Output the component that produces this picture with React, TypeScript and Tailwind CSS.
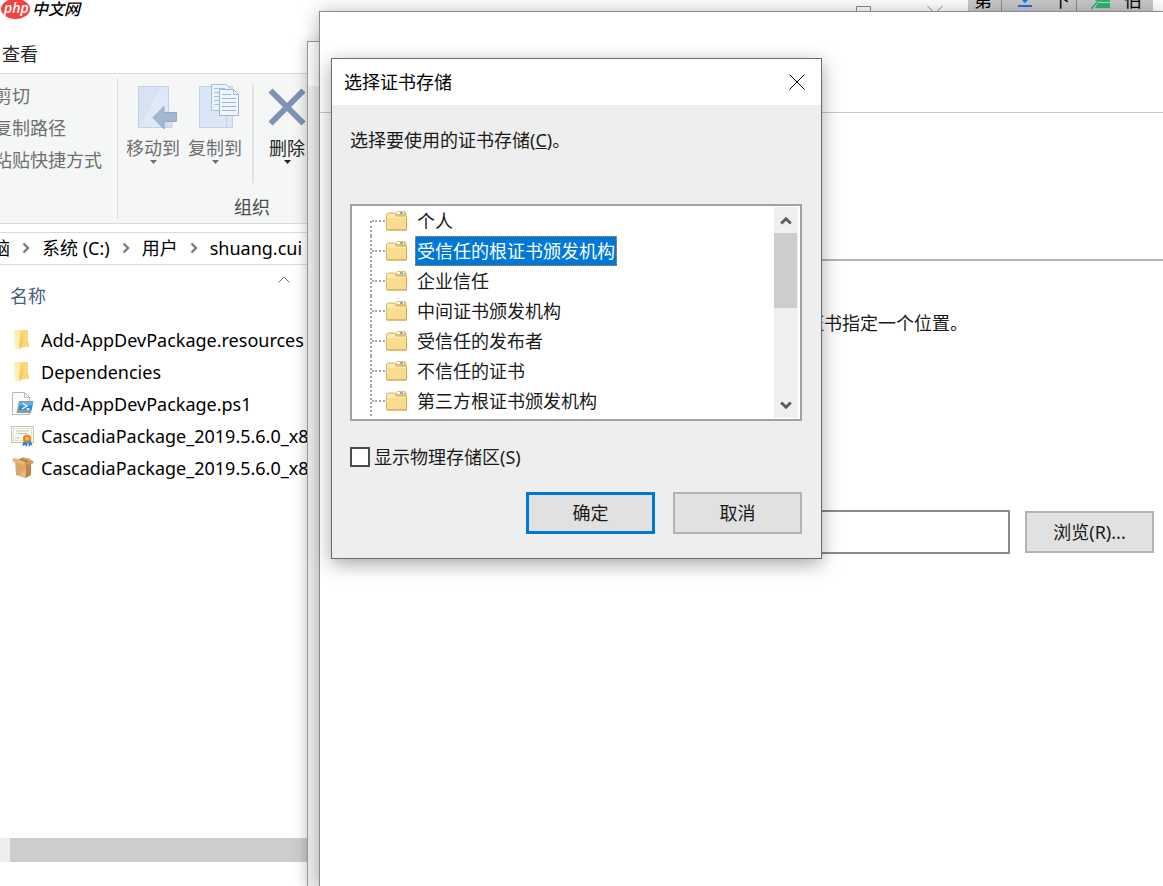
import type { ReactNode } from "react";
import { useState } from "react";

const stores = [
  "个人",
  "受信任的根证书颁发机构",
  "企业信任",
  "中间证书颁发机构",
  "受信任的发布者",
  "不信任的证书",
  "第三方根证书颁发机构",
];

function FolderIcon() {
  return (
    <svg width="24" height="24" viewBox="0 0 24 24">
      <path d="M4 2h6v17H4z" fill="#fbe8a8" />
      <path d="M9 2h8v12l1 1v4H9z" fill="#f8d775" />
      <path d="M3 3l5 2v17l-4-2z" fill="#fdeebb" />
      <path d="M10 8l2-3v14l-4 2v-6z" fill="#f5cf66" />
    </svg>
  );
}

function ScriptIcon() {
  return (
    <svg width="24" height="24" viewBox="0 0 24 24">
      <path d="M1.500 .5h12l5 5v17h-17z" fill="#fafafa" stroke="#b5b8bb" />
      <path d="M13.500 .5v5h5" fill="none" stroke="#b5b8bb" />
      <path d="M8 9h14.500l-2.500 12H5.500z" fill="#8d9aa5" />
      <path d="M9.500 10h12.500l-1.500 8H7.500z" fill="#2b8ed8" />
      <path d="M9.500 10h12.500l-.7 3.500H8.700z" fill="#5db1ea" />
      <path d="M12 11.500l4 2.500-5 3M15.500 17h3" fill="none" stroke="#fff" strokeWidth="1.400" />
    </svg>
  );
}

function CertificateIcon() {
  return (
    <svg width="24" height="24" viewBox="0 0 24 24">
      <rect x="0.500" y="2.500" width="22" height="16" fill="#fbfaf4" stroke="#c9c3ac" />
      <rect x="2.500" y="4.500" width="18" height="12" fill="none" stroke="#e4e0d0" />
      <path d="M5 7h13M7 9.500h9M4 14h5" stroke="#b9c3cc" />
      <path d="M13 16l-2 6 3-1 2 2 1-5 1 5 1.500-2 2 .5-2-6z" fill="#2f86d6" />
      <circle cx="16" cy="14.500" r="4" fill="#e08a1e" />
      <circle cx="16" cy="14.500" r="2" fill="#f6b54a" />
    </svg>
  );
}

function PackageIcon() {
  return (
    <svg width="24" height="24" viewBox="0 0 24 24">
      <path d="M4 5l11 3v14L5 19z" fill="#d9a766" />
      <path d="M15 8l5-2v13l-5 3z" fill="#bb8442" />
      <path d="M4 4l8-2 8 3-5 3z" fill="#a9763a" />
      <path d="M1 3l3-1 11 4-2 3L2 6z" fill="#e3b778" />
      <path d="M15 6l6-2 2 3-7 2z" fill="#cf9a55" />
      <path d="M8 20l6-7v9z" fill="#e4bd85" />
      <path d="M11 1l9 2-2 2-7-2z" fill="#d6a564" />
    </svg>
  );
}

const files: { name: string; icon: ReactNode }[] = [
  { name: "Add-AppDevPackage.resources", icon: <FolderIcon /> },
  { name: "Dependencies", icon: <FolderIcon /> },
  { name: "Add-AppDevPackage.ps1", icon: <ScriptIcon /> },
  { name: "CascadiaPackage_2019.5.6.0_x8", icon: <CertificateIcon /> },
  { name: "CascadiaPackage_2019.5.6.0_x8", icon: <PackageIcon /> },
];

function MoveIcon() {
  return (
    <svg width="40" height="46" viewBox="0 0 40 46">
      <rect x="1.500" y="2.500" width="30" height="41" fill="#d7e3f3" stroke="#c3d2e8" />
      <path d="M2 43L24 3h7v40z" fill="#dfe9f6" />
      <path d="M31.500 27l3.500 3v13.500h-7V30z" fill="#d3dff0" stroke="#c3d2e8" />
      <path d="M16 33.500L27 22.500v6h12.500v9H27v7.500z" fill="#a3b7d0" stroke="#93a9c5" />
    </svg>
  );
}

function CopyIcon() {
  return (
    <svg width="42" height="46" viewBox="0 0 42 46">
      <rect x="1.500" y="2.500" width="33" height="41" fill="#dbe6f4" stroke="#c3d2e8" />
      <path d="M28.500 28v15.500" stroke="#c3d2e8" />
      <path d="M13.500 .5h15l4 4v22h-19z" fill="#e9f2fa" stroke="#a9c1dc" />
      <path d="M16 4.500h11M16 8.500h6M16 12.500h6M16 16.500h6M16 20.500h6" stroke="#a9c1dc" />
      <path d="M21.500 5.500h14l5 5v21h-19z" fill="#eef6fc" stroke="#9db8d6" />
      <path d="M35.500 5.500v5h5" fill="none" stroke="#9db8d6" />
      <path d="M24 10.500h9M24 14.500h14M24 18.500h14M24 22.500h14M24 26.500h14" stroke="#9db8d6" />
    </svg>
  );
}

function DeleteIcon() {
  return (
    <svg width="38" height="46" viewBox="0 0 38 46">
      <path d="M2.500 6.500l33 33M35.500 6.500l-33 33" stroke="#8093b6" strokeWidth="6" />
    </svg>
  );
}

function RibbonButton({ label, icon, dark = false }: { label: string; icon: ReactNode; dark?: boolean }) {
  return (
    <button
      type="button"
      className={
        dark
          ? "flex shrink-0 flex-col items-center text-[#262626]"
          : "flex shrink-0 flex-col items-center text-[#6f6f6f]"
      }
    >
      <span className={dark ? "block" : "block pl-2"}>{icon}</span>
      <span className="mt-1.5 whitespace-nowrap leading-6">{label}</span>
      <svg width="7" height="4" viewBox="0 0 7 4">
        <path d="M0 0h7L3.500 4z" fill="currentColor" />
      </svg>
    </button>
  );
}

function Crumb() {
  return (
    <svg width="8" height="12" viewBox="0 0 8 12" className="shrink-0">
      <path d="M1.500 1.500L6 6l-4.500 4.500" fill="none" stroke="#7d7d7d" strokeWidth="2.400" />
    </svg>
  );
}

function Explorer() {
  return (
    <section className="flex h-screen w-[308px] flex-col overflow-hidden bg-white">
      <div className="flex h-[35px] shrink-0 items-start">
        <svg width="32" height="20" viewBox="0 0 32 20" className="shrink-0">
          <ellipse cx="15.500" cy="9" rx="14.500" ry="10" fill="#f8403c" />
          <text
            x="4"
            y="13"
            fill="#fff"
            fontSize="14"
            fontStyle="italic"
            fontWeight="600"
            fontFamily="Open Sans, sans-serif"
          >
            php
          </text>
        </svg>
        <span className="whitespace-nowrap text-base italic leading-[18px] font-medium">中文网</span>
      </div>

      <div className="flex h-[38px] shrink-0 items-center px-0.5">
        <button type="button" className="leading-6 text-[#262626]">
          查看
        </button>
      </div>

      <div className="flex h-[151px] shrink-0 border-y border-[#dadbdc] bg-[#f5f6f6]">
        <div className="-ml-1.5 my-1 flex w-[124px] shrink-0 flex-col items-start border-r border-[#dfe0e1] pt-0.5 text-[#6f6f6f]">
          <button type="button" className="h-8 whitespace-nowrap">剪切</button>
          <button type="button" className="h-8 whitespace-nowrap">复制路径</button>
          <button type="button" className="h-8 whitespace-nowrap">粘贴快捷方式</button>
        </div>
        <div className="flex flex-col pl-2 pt-2.5">
          <div className="flex gap-2">
            <RibbonButton label="移动到" icon={<MoveIcon />} />
            <RibbonButton label="复制到" icon={<CopyIcon />} />
            <div className="ml-0.5 h-[99px] w-0.5 shrink-0 bg-[#e2e3e4]" />
            <div className="pl-1.5">
              <RibbonButton label="删除" icon={<DeleteIcon />} dark />
            </div>
          </div>
          <span className="mt-3 pl-27 leading-6 text-[#4a4a4a]">组织</span>
        </div>
      </div>

      <nav className="mt-2 flex h-[33px] shrink-0 items-center gap-3 border-y border-[#d9d9d9] pb-0.5 whitespace-nowrap">
        <span className="-ml-2">脑</span>
        <Crumb />
        <span>系统 (C:)</span>
        <Crumb />
        <span>用户</span>
        <Crumb />
        <span>shuang.cui</span>
      </nav>

      <div className="flex shrink-0 flex-col px-2.5 pt-[11px]">
        <svg width="12" height="8" viewBox="0 0 12 8" className="mr-2 self-end">
          <path d="M.5 6.500L6 1l5.500 5.500" fill="none" stroke="#6d6d6d" />
        </svg>
        <span className="leading-6 text-[#43607e]">名称</span>
      </div>

      <ul className="flex-1 pt-4">
        {files.map((file, i) => (
          <li key={i} className="flex h-8 items-center gap-1.5 pl-[11px] whitespace-nowrap">
            <span className="shrink-0">{file.icon}</span>
            {file.name}
          </li>
        ))}
      </ul>

      <div className="mb-6 flex h-6 shrink-0 bg-[#eeeeee] pl-2.5">
        <div className="flex-1 bg-[#cdcdcd]" />
      </div>
    </section>
  );
}

function TopStrip() {
  return (
    <div className="absolute inset-x-0 top-0 flex h-3 justify-end overflow-hidden pr-2.5">
      <svg width="88" height="12" viewBox="0 0 88 12" className="mr-6 shrink-0">
        <path d="M.5 12V6.500h14V12M71.500 6l7.500 7.500L86.500 6" fill="none" stroke="#8a8a8a" />
      </svg>
      <div className="flex h-3 w-[185px] items-end bg-[#c9c9c9]">
        <span className="w-[34px] border-r border-[#8c8c8c] pl-1.5 leading-6">第</span>
        <div className="flex w-[75px] items-end gap-5 border-r border-[#8c8c8c] pl-4">
          <svg width="14" height="12" viewBox="0 0 14 12" className="shrink-0">
            <path d="M4 0h6L7 3zM0 5h14v2H0z" fill="#1f74e8" />
          </svg>
          <span className="leading-6">下</span>
        </div>
        <div className="flex flex-1 items-end gap-3.5 pl-3.5">
          <svg width="19" height="12" viewBox="0 0 19 12" className="shrink-0">
            <path d="M3 0h16v2H9zM7 3h12v5H4z" fill="#2bb673" />
            <path d="M0 9L8 0" stroke="#2bb673" strokeWidth="1.500" />
          </svg>
          <span className="leading-6">伯</span>
        </div>
      </div>
    </div>
  );
}

function Wizard() {
  return (
    <section className="absolute bottom-0 left-[319px] right-0 top-[11px] border-l border-t border-[#8c8c8c] bg-white shadow-[0_2px_18px_rgba(0,0,0,0.3)]">
      <div className="h-[101px] border-b border-[#c8c8c8]" />
      <div className="ml-12 h-[148px] border-b-2 border-[#b4b4b4]" />
      <p className="mt-[50px] pl-[486px] leading-6 text-[#1a1a1a]">证书指定一个位置。</p>
      <div className="mt-[175px] flex items-center gap-[15px] pl-12 pr-[9px]">
        <input
          type="text"
          aria-label="证书存储"
          className="h-11 min-w-0 flex-1 border-2 border-[#8a8a8a] bg-white px-2 outline-none"
        />
        <button type="button" className="h-[42px] w-[129px] border-2 border-[#b3b3b3] bg-[#e1e1e1] text-[#1a1a1a]">
          浏览(R)...
        </button>
      </div>
    </section>
  );
}

function StoreIcon() {
  return (
    <svg width="22" height="22" viewBox="0 0 22 22" className="shrink-0">
      <path d="M10 4l2-3h8l1.500 2v16H10z" fill="#e3bf72" />
      <rect x="12" y="2" width="7" height="2" fill="#fff" />
      <rect x="15" y="2" width="3" height="2" fill="#7db4de" />
      <path d="M1.500 5q0-2 2-2h6l2 3h10v14H1.500z" fill="#f8dc90" stroke="#dcb868" />
      <path d="M2 6q0-2 1.500-2h5.500l2 3h10v1H2z" fill="#fbe9b4" />
      <path d="M21.500 8v12H2" fill="none" stroke="#cda654" />
    </svg>
  );
}

function ScrollArrow({ down = false }: { down?: boolean }) {
  return (
    <svg width="12" height="9" viewBox="0 0 12 9">
      <path
        d={down ? "M1.200 1.500L6 6.300l4.800-4.800" : "M1.200 7.500L6 2.700l4.800 4.800"}
        fill="none"
        stroke="#5c5c5c"
        strokeWidth="2.800"
      />
    </svg>
  );
}

function StoreTree() {
  const [selected, setSelected] = useState(1);

  return (
    <div className="flex h-[217px] overflow-hidden border-2 border-[#9da1ab] bg-white">
      <ul role="tree" className="flex-1 pl-[18px]">
        {stores.map((store, i) => (
          <li
            key={store}
            role="treeitem"
            aria-selected={i === selected}
            onClick={() => setSelected(i)}
            className="flex h-[30px] cursor-default items-center whitespace-nowrap"
          >
            <span
              className={
                i === 0
                  ? "h-[15px] self-end border-l-2 border-dotted border-[#a8a8a8]"
                  : "h-[30px] border-l-2 border-dotted border-[#a8a8a8]"
              }
            />
            <span className="w-[13px] border-t-2 border-dotted border-[#a8a8a8]" />
            <StoreIcon />
            <span
              className={
                i === selected
                  ? "ml-2 border border-dotted border-[#e8892b] bg-[#0078d7] px-px leading-7 text-white"
                  : "ml-2 px-0.5 leading-7"
              }
            >
              {store}
            </span>
          </li>
        ))}
      </ul>
      <div className="my-px mr-0.5 flex w-6 flex-col items-center bg-[#f0f0f0]">
        <div className="flex h-[26px] items-center">
          <ScrollArrow />
        </div>
        <div className="w-full flex-1 pr-px">
          <div className="h-[75px] bg-[#cdcdcd]" />
        </div>
        <div className="flex h-[26px] items-center">
          <ScrollArrow down />
        </div>
      </div>
    </div>
  );
}

function StoreDialog() {
  return (
    <section
      role="dialog"
      aria-labelledby="dialog-title"
      className="absolute left-[331px] top-[58px] w-[491px] border border-[#6b6b6b] bg-[#eeeeee] shadow-[0_5px_18px_rgba(0,0,0,0.35)]"
    >
      <header className="flex h-[46px] items-center justify-between bg-white pl-3 pr-4">
        <h1 id="dialog-title" className="leading-6">
          选择证书存储
        </h1>
        <button type="button" aria-label="关闭">
          <svg width="16" height="16" viewBox="0 0 16 16">
            <path d="M.5.5l15 15M15.500.5l-15 15" stroke="#000" />
          </svg>
        </button>
      </header>

      <div className="px-[18px] pb-6 pt-[23px] text-[#1a1a1a]">
        <p className="leading-6">
          选择要使用的证书存储(<span className="underline">C</span>)。
        </p>
        <div className="mt-[52px] mr-px">
          <StoreTree />
        </div>
        <label className="mt-6 flex items-center gap-1 leading-6">
          <input
            type="checkbox"
            className="h-5 w-5 appearance-none border-2 border-[#4a4a4a] bg-white checked:bg-[#0078d7]"
          />
          显示物理存储区(S)
        </label>
        <div className="mt-[23px] mr-px flex justify-end gap-[18px]">
          <button type="button" className="h-[42px] w-[129px] border-3 border-[#0078d7] bg-[#e1e1e1]">
            确定
          </button>
          <button type="button" className="h-[42px] w-[129px] border-2 border-[#b3b3b3] bg-[#e1e1e1]">
            取消
          </button>
        </div>
      </div>
    </section>
  );
}

export default function App() {
  return (
    <main className="relative min-h-screen overflow-hidden bg-white font-['Noto_Sans','Noto_Sans_CJK_SC',sans-serif] text-lg leading-6 text-black">
      <Explorer />
      <TopStrip />
      {/* window between the explorer and the wizard, only its left edge shows */}
      <section className="absolute bottom-0 left-[307px] right-0 top-[41px] border-l border-t border-[#9a9a9a] bg-[#f0f0f0] shadow-[0_2px_14px_rgba(0,0,0,0.22)]">
        <div className="h-11 bg-white" />
      </section>
      <Wizard />
      <StoreDialog />
    </main>
  );
}
